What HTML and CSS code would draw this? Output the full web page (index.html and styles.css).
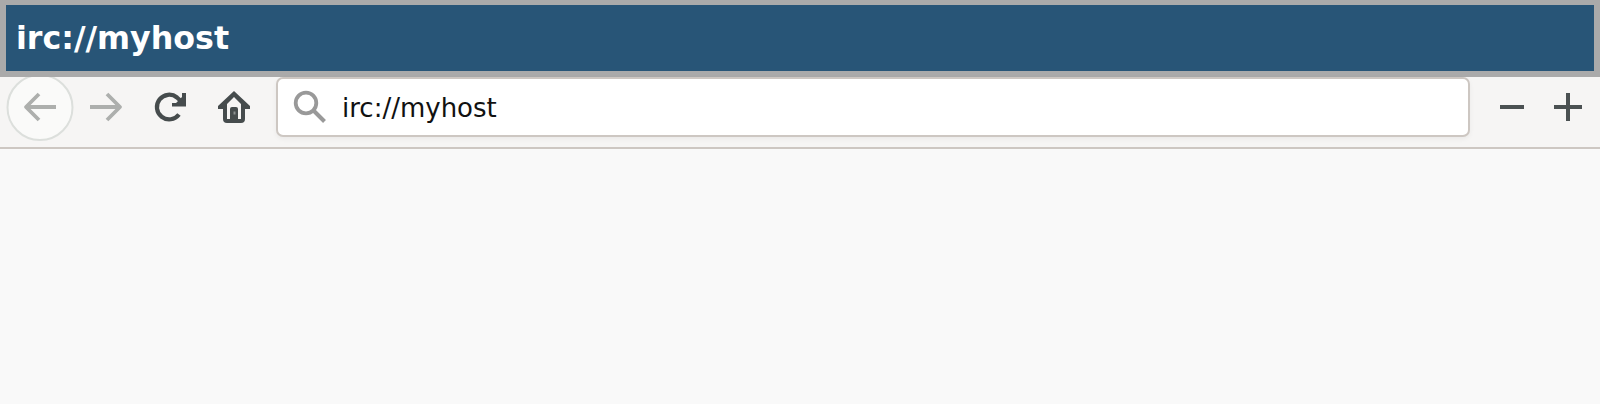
FILE: index.html
```html
<!DOCTYPE html>
<html lang="en">
<head>
<meta charset="utf-8">
<title>irc://myhost</title>
<link rel="stylesheet" href="styles.css">
</head>
<body>
<header class="titlebar"><span class="title">irc://myhost</span></header>
<nav class="toolbar">
<svg class="nav-icons" width="276" height="70" viewBox="0 77 276 70">
<circle cx="40" cy="107.500" r="32.500" fill="#fafaf9" stroke="#dcdfdc" stroke-width="2"/>
<g fill="none" stroke="#adafad" stroke-width="3.800" stroke-linejoin="round">
<path d="M56 107H26M39 94L26 107L39 120"/>
<path d="M90 107H120M107 94L120 107L107 120"/>
</g>
<path d="M179 114.500A12.300 12.300 0 1 1 177 97.500L183 103" fill="none" stroke="#464c4d" stroke-width="4.200"/>
<path d="M182 93H186V106.500H172V103H176L182 97Z" fill="#464c4d"/>
<path d="M234 91L250 106V109H245V119Q245 123 241 123H227Q223 123 223 119V109H218V106ZM234 97L227 104V119H230V109Q230 107 232 107H236Q238 107 238 109V119H241V104Z" fill="#464c4d" fill-rule="evenodd"/>
<path d="M234.500 111.500V114.500" stroke="#8d9191" stroke-width="2"/>
</svg>
<div class="address">
<svg class="search" width="34" height="34" viewBox="292 90 34 34" fill="none" stroke="#999">
<circle cx="306" cy="103" r="10.300" stroke-width="3.800"/>
<path d="M313.500 110.500L324.500 121.500" stroke-width="4"/>
</svg>
<span class="url">irc://myhost</span>
</div>
<svg class="zoom-icons" width="130" height="70" viewBox="1470 77 130 70" fill="none" stroke="#4b5152" stroke-width="4">
<path d="M1500 107H1524M1554 107H1582M1568 93V121"/>
</svg>
</nav>
<main class="page"></main>
</body>
</html>
```
FILE: styles.css
```css
* { box-sizing: border-box; }
body {
  margin: 0;
  height: 404px;
  display: flex;
  flex-direction: column;
  background: #f9f9f9;
  overflow: hidden;
}
.titlebar {
  height: 77px;
  flex: none;
  display: flex;
  align-items: center;
  padding-left: 10px;
  background: #285577;
  border: solid #aaa;
  border-width: 5px 6px 6px;
}
.title {
  color: #fff;
  font: bold 31.7px/40px "DejaVu Sans", sans-serif;
}
.toolbar {
  height: 72px;
  flex: none;
  display: flex;
  background: #f6f5f4;
  border-bottom: 2px solid #cdc7c2;
}
.nav-icons, .zoom-icons { flex: none; display: block; }
.address {
  flex: 1;
  height: 60px;
  display: flex;
  align-items: center;
  padding-left: 14px;
  background: #fff;
  border: 2px solid #cdc7c2;
  border-radius: 7px;
  box-shadow: 0 2px 5px rgba(0, 0, 0, .05);
}
.search { flex: none; }
.url {
  margin-left: 16px;
  padding-top: 2px;
  color: #111;
  font: 26px/40px "DejaVu Sans", sans-serif;
}
.page { flex: 1; }
```
